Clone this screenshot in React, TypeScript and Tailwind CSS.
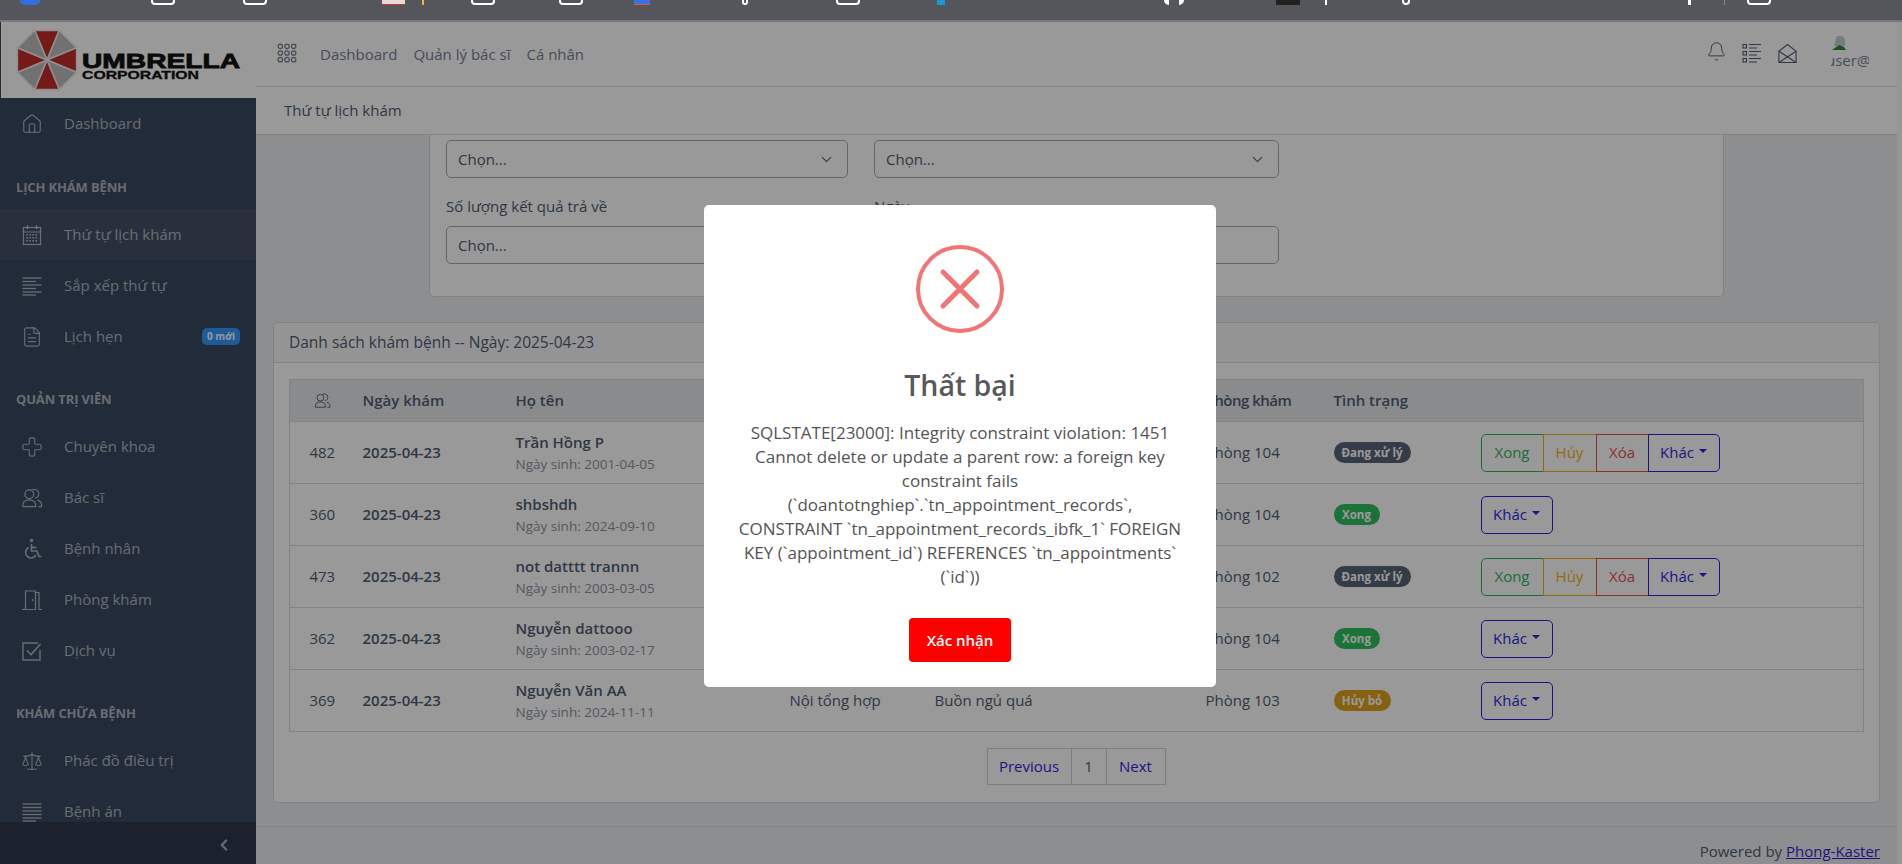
import {
  Bell,
  ChevronDown,
  ChevronLeft,
  Cross,
  FileText,
  House,
  Scale,
} from 'lucide-react';

const bookmarks = [
  { left: 'ml-[20px]', cls: 'w-[20px] rounded-b-full bg-[#2f6fe0]' },
  { left: 'ml-[111px]', cls: 'w-[24px] rounded-b-[4px] border-2 border-t-0 border-white' },
  { left: 'ml-[68px]', cls: 'w-[24px] rounded-b-[4px] border-2 border-t-0 border-white' },
  { left: 'ml-[115px]', cls: 'w-[23px] bg-[#e8d8d8] border-b border-[#c33]' },
  { left: 'ml-[17px]', cls: 'w-[2px] bg-[#e8b93a]' },
  { left: 'ml-[47px]', cls: 'w-[24px] rounded-b-[4px] border-2 border-t-0 border-white' },
  { left: 'ml-[64px]', cls: 'w-[24px] rounded-b-[4px] border-2 border-t-0 border-white' },
  { left: 'ml-[51px]', cls: 'w-[16px] bg-[#3d6fe0] border-b border-[#d54]' },
  { left: 'ml-[92px]', cls: 'w-[6px] rounded-b-full border-2 border-t-0 border-white' },
  { left: 'ml-[88px]', cls: 'w-[24px] rounded-b-[4px] border-2 border-t-0 border-white' },
  { left: 'ml-[77px]', cls: 'w-[8px] bg-[#1c9ad6]' },
  { left: 'ml-[219px]', cls: 'w-[20px] rounded-b-full border-x-[5px] border-white' },
  { left: 'ml-[92px]', cls: 'w-[24px] bg-[#222]' },
  { left: 'ml-[25px]', cls: 'w-[2px] bg-white' },
  { left: 'ml-[75px]', cls: 'w-[8px] rounded-b-full border-2 border-t-0 border-white' },
  { left: 'ml-[278px]', cls: 'w-[3px] bg-white' },
  { left: 'ml-[33px]', cls: 'w-px bg-[#8a8b90]' },
  { left: 'ml-[22px]', cls: 'w-[24px] rounded-b-[4px] border-2 border-t-0 border-white' },
];

function Grid3() {
  const dots = [3, 9, 15];
  return (
    <svg width="20" height="20" viewBox="0 0 18 18" fill="none" stroke="currentColor" strokeWidth="1.1">
      {dots.map((y) => dots.map((x) => <circle key={`${x}-${y}`} cx={x} cy={y} r="2" />))}
    </svg>
  );
}

function People({ size = 22 }: { size?: number }) {
  return (
    <svg width={size} height={size} viewBox="0 0 24 24" fill="none" stroke="currentColor" strokeWidth="1.3">
      <circle cx="9" cy="8" r="4.8" />
      <path d="M2 21.5v-2.2c0-3 3-5.300 7-5.300s7 2.300 7 5.300v2.200z" />
      <path d="M12.500 3.200a4.800 4.800 0 1 1 3 9" />
      <path d="M18 14.300c2.500.7 4.500 2.400 4.500 5v2.200H19" />
    </svg>
  );
}

function TaskList() {
  return (
    <svg width="20" height="20" viewBox="0 0 20 20" fill="none" stroke="currentColor" strokeWidth="1.1">
      <rect x="1" y="1.500" width="3.500" height="3.500" />
      <rect x="1" y="8.500" width="3.500" height="3.500" />
      <rect x="1" y="15.500" width="3.500" height="3.500" />
      <path d="M7 1.500h12M7 5h8M7 8.500h12M7 12h8M7 15.500h12M7 19h8" />
    </svg>
  );
}

function Envelope() {
  return (
    <svg width="19" height="21" viewBox="0 0 21 22" fill="none" stroke="currentColor" strokeWidth="1.2">
      <path d="M1 8.500L10.500 1 20 8.500V21H1z" />
      <path d="M1 8.500L20 21M20 8.500L1 21" />
    </svg>
  );
}

function CalendarGrid() {
  const xs = [7, 10, 13, 16];
  const ys = [11, 14, 17];
  return (
    <svg width="22" height="22" viewBox="0 0 22 22" fill="none" stroke="currentColor" strokeWidth="1.2">
      <rect x="2.500" y="3.500" width="17" height="17" />
      <path d="M2.500 8h17M6.500 1v4M15.500 1v4" />
      {ys.map((y) => xs.map((x) => <rect key={`${x}-${y}`} x={x - 1.6} y={y - 1} width="1.600" height="1.600" fill="currentColor" stroke="none" />))}
    </svg>
  );
}

function Lines({ short }: { short: 'odd' | 'last' }) {
  const ys = [3, 6.5, 10, 13.500, 17, 20];
  return (
    <svg width="22" height="22" viewBox="0 0 22 22" fill="none" stroke="currentColor" strokeWidth="1.3">
      {ys.map((y, i) => {
        const isShort = short === 'odd' ? i % 2 === 1 : i === ys.length - 1;
        return <path key={y} d={`M1.500 ${y}H${isShort ? 15 : 20.5}`} />;
      })}
    </svg>
  );
}

function TaskBox() {
  return (
    <svg width="22" height="22" viewBox="0 0 22 22" fill="none" stroke="currentColor" strokeWidth="1.4">
      <path d="M19 10v10H2V3h15" />
      <path d="M6 10.500l4 4 9.500-10.500" strokeWidth="1.600" />
    </svg>
  );
}

function Wheelchair() {
  return (
    <svg width="22" height="22" viewBox="0 0 22 22" fill="none" stroke="currentColor" strokeWidth="1.6">
      <circle cx="10.500" cy="2.500" r="1.800" fill="currentColor" stroke="none" />
      <path d="M10.500 6v7h5.500l2 5.500h2.500" />
      <path d="M10.500 9.500h5" />
      <path d="M7.500 9.500a5.500 5.500 0 1 0 7.500 7.300" />
    </svg>
  );
}

function Door() {
  return (
    <svg width="22" height="22" viewBox="0 0 22 22" fill="none" stroke="currentColor" strokeWidth="1.2">
      <path d="M1 20.500h3.500V2h10v18.500h-10" />
      <path d="M14.500 3.500h3.500v17h3" />
      <circle cx="11.500" cy="11" r="1" fill="currentColor" stroke="none" />
    </svg>
  );
}

function Logo() {
  const cx = 46;
  const cy = 38;
  const r = 32;
  const panels = Array.from({ length: 8 }, (_, k) => {
    const a = ((k * 45 - 90) * Math.PI) / 180;
    const d = (22.5 * Math.PI) / 180;
    const p1 = `${cx + r * Math.cos(a - d)},${cy + r * Math.sin(a - d)}`;
    const p2 = `${cx + r * Math.cos(a + d)},${cy + r * Math.sin(a + d)}`;
    return { k, points: `${cx},${cy} ${p1} ${p2}` };
  });
  return (
    <svg width="255" height="76" viewBox="0 0 255 76">
      {panels.map((p) => (
        <polygon
          key={p.k}
          points={p.points}
          fill={p.k % 2 === 0 ? '#c42a2a' : '#bdbdbd'}
          stroke="#eeeeee"
          strokeWidth="1.500"
        />
      ))}
      <text x="81" y="46" fontFamily="Liberation Sans" fontWeight="700" fontSize="20" textLength="158" lengthAdjust="spacingAndGlyphs" fill="#111" stroke="#111" strokeWidth="0.8">
        UMBRELLA
      </text>
      <text x="81" y="57" fontFamily="Liberation Sans" fontWeight="700" fontSize="11" textLength="117" lengthAdjust="spacingAndGlyphs" fill="#111" stroke="#111" strokeWidth="0.3">
        CORPORATION
      </text>
    </svg>
  );
}

function NavItem({ icon, label, active, badge, className = '' }: { icon: React.ReactNode; label: string; active?: boolean; badge?: string; className?: string }) {
  return (
    <div className={`h-[51px] shrink-0 flex items-center text-[15px] text-white/60 ${active ? 'bg-white/5' : ''} ${className}`}>
      <span className="w-[64px] flex justify-center">{icon}</span>
      <span>{label}</span>
      {badge && (
        <span className="ml-auto mr-[16px] h-[17px] w-[38px] rounded-[5px] bg-[#3399ff] text-[10px] font-bold text-white flex items-center justify-center">
          {badge}
        </span>
      )}
    </div>
  );
}

function NavTitle({ label }: { label: string }) {
  return (
    <div className="h-[59px] shrink-0 pt-[17px] pl-[16px] flex items-center text-[13px] font-bold text-white/60 tracking-[-0.15px]">
      {label}
    </div>
  );
}

function Sidebar() {
  const ic = { size: 22, strokeWidth: 1.2 };
  return (
    <div className="w-[256px] shrink-0 h-full flex flex-col bg-[#3a4860]">
      <div className="ml-[1px] h-[76px] shrink-0 bg-white">
        <Logo />
      </div>
      <div className="flex-1 min-h-0 overflow-hidden flex flex-col">
        <NavItem icon={<House {...ic} />} label="Dashboard" className="mb-[1px]" />
        <NavTitle label="LỊCH KHÁM BỆNH" />
        <NavItem icon={<CalendarGrid />} label="Thứ tự lịch khám" active />
        <NavItem icon={<Lines short="odd" />} label="Sắp xếp thứ tự" />
        <NavItem icon={<FileText {...ic} />} label="Lịch hẹn" badge="0 mới" />
        <NavTitle label="QUẢN TRỊ VIÊN" />
        <NavItem icon={<Cross {...ic} />} label="Chuyên khoa" />
        <NavItem icon={<People />} label="Bác sĩ" />
        <NavItem icon={<Wheelchair />} label="Bệnh nhân" />
        <NavItem icon={<Door />} label="Phòng khám" />
        <NavItem icon={<TaskBox />} label="Dịch vụ" />
        <NavTitle label="KHÁM CHỮA BỆNH" />
        <NavItem icon={<Scale {...ic} />} label="Phác đồ điều trị" />
        <NavItem icon={<Lines short="last" />} label="Bệnh án" />
      </div>
      <div className="h-[42px] shrink-0 bg-[#2d384b] flex items-center justify-end pr-[23px] pt-[4px] text-white/60">
        <ChevronLeft size={18} strokeWidth={3.2} />
      </div>
    </div>
  );
}

function Header() {
  return (
    <div className="h-[65px] shrink-0 bg-white border-b border-[#d8dbe0] flex items-start text-[15px] text-[#768192] pt-[21px]">
      <span className="ml-[21px] w-[43px]"><Grid3 /></span>
      <span>Dashboard</span>
      <span className="ml-[16px]">Quản lý bác sĩ</span>
      <span className="ml-[16px]">Cá nhân</span>
      <div className="ml-auto flex items-start text-[#4f5d73]">
        <Bell size={21} strokeWidth={1.1} className="-mt-[2px]" />
        <span className="ml-[15px]"><TaskList /></span>
        <span className="ml-[16px]"><Envelope /></span>
        <div className="ml-[34px] mr-[28px] -mt-[8px] w-[38px] overflow-hidden">
          <svg width="16" height="16" viewBox="0 0 16 16" className="ml-[1px]">
            <path d="M5 1h5l3 3v7H2z" fill="#c8ccd2" />
            <path d="M0 15l7-5 5 2 2 3z" fill="#2f8a2f" />
          </svg>
          <div className="-ml-[5px] text-[15px] leading-[18px] whitespace-nowrap text-[#768192]">user@</div>
        </div>
      </div>
    </div>
  );
}

function SelectBox({ className = '' }: { className?: string }) {
  return (
    <div className={`h-[38px] rounded-[5px] border border-[#a9abb5] bg-white pl-[11px] pr-[12px] flex items-center justify-between text-[15px] text-[#4f5d73] ${className}`}>
      <span>Chọn...</span>
      <ChevronDown size={17} strokeWidth={1.6} />
    </div>
  );
}

type Row = { id: number; name: string; dob: string; room: string; status: 'doing' | 'done' | 'cancel'; spec?: string; reason?: string };

const rows: Row[] = [
  { id: 482, name: 'Trần Hồng P', dob: '2001-04-05', room: 'Phòng 104', status: 'doing' },
  { id: 360, name: 'shbshdh', dob: '2024-09-10', room: 'Phòng 104', status: 'done' },
  { id: 473, name: 'not datttt trannn', dob: '2003-03-05', room: 'Phòng 102', status: 'doing' },
  { id: 362, name: 'Nguyễn dattooo', dob: '2003-02-17', room: 'Phòng 104', status: 'done' },
  { id: 369, name: 'Nguyễn Văn AA', dob: '2024-11-11', room: 'Phòng 103', status: 'cancel', spec: 'Nội tổng hợp', reason: 'Buồn ngủ quá' },
];

function Badge({ status }: { status: Row['status'] }) {
  const map = {
    doing: { label: 'Đang xử lý', cls: 'bg-[#576479] w-[77px]' },
    done: { label: 'Xong', cls: 'bg-[#30c060] w-[46px]' },
    cancel: { label: 'Hủy bỏ', cls: 'bg-[#e0a31c] w-[57px]' },
  }[status];
  return (
    <span className={`h-[21px] rounded-full text-[11.5px] font-bold text-white flex items-center justify-center ${map.cls}`}>
      {map.label}
    </span>
  );
}

function Caret() {
  return <span className="ml-[5px] mb-[3px] w-0 h-0 border-x-[4px] border-x-transparent border-t-[4px] border-t-current" />;
}

function Actions({ status }: { status: Row['status'] }) {
  const base = 'h-[38px] border flex items-center justify-center text-[15px] bg-transparent';
  const other = 'w-[72px] border-[#321fdb] text-[#321fdb]';
  if (status !== 'doing') {
    return (
      <div className={`${base} ${other} rounded-[5px]`}>
        Khác
        <Caret />
      </div>
    );
  }
  return (
    <div className="flex">
      <div className={`${base} w-[63px] rounded-l-[5px] border-[#2eb85c] text-[#2eb85c]`}>Xong</div>
      <div className={`${base} w-[54px] -ml-px border-[#f9b115] text-[#f9b115]`}>Hủy</div>
      <div className={`${base} w-[53px] -ml-px border-[#e55353] text-[#e55353]`}>Xóa</div>
      <div className={`${base} ${other} -ml-px rounded-r-[5px]`}>
        Khác
        <Caret />
      </div>
    </div>
  );
}

function Table() {
  return (
    <table className="w-[1574px] table-fixed border-collapse border border-[#d8dbe0] text-[15px] text-[#4f5d73]">
      <colgroup>
        <col className="w-[61px]" />
        <col className="w-[153px]" />
        <col className="w-[274px]" />
        <col className="w-[145px]" />
        <col className="w-[271px]" />
        <col className="w-[128px]" />
        <col className="w-[147px]" />
        <col className="w-[395px]" />
      </colgroup>
      <thead>
        <tr className="h-[42px] bg-[#e6e8ec] text-left border-b border-[#d8dbe0]">
          <th className="font-semibold">
            <span className="flex justify-center pl-[4px]"><People size={17} /></span>
          </th>
          <th className="px-3 font-semibold">Ngày khám</th>
          <th className="px-3 font-semibold">Họ tên</th>
          <th />
          <th />
          <th className="px-3 font-semibold tracking-[-0.5px] whitespace-nowrap">Phòng khám</th>
          <th className="px-3 font-semibold">Tình trạng</th>
          <th />
        </tr>
      </thead>
      <tbody>
        {rows.map((r) => (
          <tr key={r.id} className="h-[62px] border-b border-[#d8dbe0]">
            <td className="text-center pl-[4px]">{r.id}</td>
            <td className="px-3 font-semibold">2025-04-23</td>
            <td className="px-3">
              <div className="font-semibold leading-[22px]">{r.name}</div>
              <div className="text-[13.5px] font-medium text-[#8a93a2] leading-[22px]">Ngày sinh: {r.dob}</div>
            </td>
            <td className="px-3 font-medium">{r.spec}</td>
            <td className="px-3 font-medium">{r.reason}</td>
            <td className="px-3 font-medium">{r.room}</td>
            <td className="px-3"><Badge status={r.status} /></td>
            <td className="px-3"><div className="flex"><Actions status={r.status} /></div></td>
          </tr>
        ))}
      </tbody>
    </table>
  );
}

function Pagination() {
  const cell = 'h-[37px] border border-[#d0d2d8] flex items-center justify-center text-[15px]';
  return (
    <div className="mt-[16px] w-[1574px] flex justify-center">
      <div className={`${cell} w-[85px] text-[#321fdb]`}>Previous</div>
      <div className={`${cell} w-[36px] -ml-px text-[#4f5d73]`}>1</div>
      <div className={`${cell} w-[60px] -ml-px text-[#321fdb]`}>Next</div>
    </div>
  );
}

function Modal() {
  return (
    <div className="w-[512px] h-[482px] rounded-[5px] bg-white flex flex-col items-center">
      <svg width="88" height="88" viewBox="0 0 88 88" fill="none" stroke="#f27474" className="mt-[40px]">
        <circle cx="44" cy="44" r="42" strokeWidth="4" />
        <path d="M27 27l34 34M61 27l-34 34" strokeWidth="5" strokeLinecap="round" />
      </svg>
      <h2 className="mt-[34px] text-[28.5px] leading-[36px] font-semibold text-[#595959]">Thất bại</h2>
      <p className="mt-[18px] text-center text-[17px] leading-[24px] text-[#545454] whitespace-nowrap">
        SQLSTATE[23000]: Integrity constraint violation: 1451
        <br />
        Cannot delete or update a parent row: a foreign key
        <br />
        constraint fails
        <br />
        (`doantotnghiep`.`tn_appointment_records`,
        <br />
        CONSTRAINT `tn_appointment_records_ibfk_1` FOREIGN
        <br />
        KEY (`appointment_id`) REFERENCES `tn_appointments`
        <br />
        (`id`))
      </p>
      <button className="mt-[29px] w-[102px] h-[44px] rounded-[4px] bg-[#ff0000] text-white text-[15px] font-semibold">
        Xác nhận
      </button>
    </div>
  );
}

export default function App() {
  return (
    <div className="w-[1902px] h-[864px] overflow-hidden flex flex-col font-['Open_Sans','Noto_Sans',sans-serif]">
      <div className="h-[22px] shrink-0 bg-[#55565c] border-b-2 border-[#77787c] flex items-start">
        {bookmarks.map((b, i) => (
          <span key={i} className={`h-[5px] shrink-0 ${b.left} ${b.cls}`} />
        ))}
      </div>
      <div className="relative flex-1 min-h-0 flex bg-[#ebedef]">
        <Sidebar />
        <div className="flex-1 min-w-0 flex flex-col">
          <Header />
          <div className="h-[48px] shrink-0 bg-white border-b border-[#d8dbe0] pl-[28px] flex items-center text-[15px] text-[#4f5d73]">
            Thứ tự lịch khám
          </div>
          <div className="flex-1 min-h-0 overflow-hidden px-[17px]">
            <div className="w-[1295px] h-[182px] mx-auto -mt-[20px] rounded-[5px] border border-[#d8dbe0] bg-white pt-[24px] px-[16px] text-[15px] text-[#4f5d73]">
              <div className="grid grid-cols-[402px_405px] gap-x-[26px]">
                <SelectBox />
                <SelectBox />
                <div className="mt-[17px] mb-[7px] h-[24px]">Số lượng kết quả trả về</div>
                <div className="mt-[17px] mb-[7px] h-[24px]">Ngày</div>
                <SelectBox />
                <div className="h-[38px] rounded-[5px] border border-[#a9abb5] bg-white" />
              </div>
            </div>
            <div className="mt-[25px] h-[481px] rounded-[5px] border border-[#d8dbe0] bg-white text-[#4f5d73]">
              <div className="h-[40px] pl-[15px] flex items-center text-[15.5px] bg-[#f7f7f8] border-b border-[#d8dbe0] rounded-t-[5px]">
                Danh sách khám bệnh -- Ngày: 2025-04-23
              </div>
              <div className="pt-[16px] pl-[15px]">
                <Table />
                <Pagination />
              </div>
            </div>
          </div>
          <div className="h-[38px] shrink-0 border-t border-[#d8dbe0] pt-[14px] pr-[17px] text-right text-[15px] leading-[20px] text-[#4f5d73]">
            Powered by <span className="text-[#321fdb] underline">Phong-Kaster</span>
          </div>
        </div>
        <div className="w-[5px] shrink-0 bg-[#fafafa]" />
        <div className="absolute inset-0 bg-black/40 flex justify-center items-start pl-[18px] pt-[183px]">
          <Modal />
        </div>
      </div>
    </div>
  );
}
